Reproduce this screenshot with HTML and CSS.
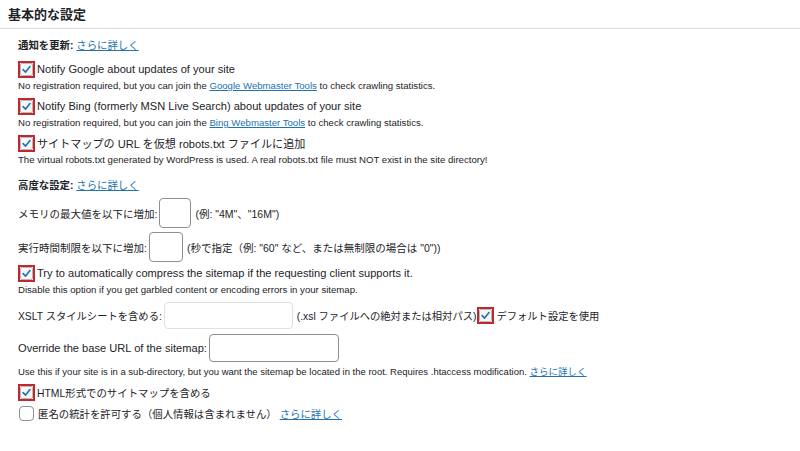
FILE: index.html
```html
<!DOCTYPE html>
<html lang="ja">
  <head>
    <meta charset="UTF-8" />
    <title>基本的な設定</title>
    <link rel="stylesheet" href="styles.css">
  </head>
  <body>
    <h2 class="box-title">基本的な設定</h2>

    <div class="box-body">
      <!-- Ping settings -->
      <div class="group-title">通知を更新: <a href="#">さらに詳しく</a></div>

      <label class="check-row first">
        <span class="cb on"><svg viewBox="0 0 12 12"><path d="M2.3 6.2 L5 8.8 L9.8 2.8" /></svg></span>
        Notify Google about updates of your site
      </label>
      <div class="desc">No registration required, but you can join the <a href="#">Google Webmaster Tools</a> to check crawling statistics.</div>

      <label class="check-row">
        <span class="cb on"><svg viewBox="0 0 12 12"><path d="M2.3 6.2 L5 8.8 L9.8 2.8" /></svg></span>
        Notify Bing (formerly MSN Live Search) about updates of your site
      </label>
      <div class="desc">No registration required, but you can join the <a href="#">Bing Webmaster Tools</a> to check crawling statistics.</div>

      <label class="check-row">
        <span class="cb on"><svg viewBox="0 0 12 12"><path d="M2.3 6.2 L5 8.8 L9.8 2.8" /></svg></span>
        サイトマップの URL を仮想 robots.txt ファイルに追加
      </label>
      <div class="desc">The virtual robots.txt generated by WordPress is used. A real robots.txt file must NOT exist in the site directory!</div>

      <!-- Advanced settings -->
      <div class="group-title second">高度な設定: <a href="#">さらに詳しく</a></div>

      <div class="field-row memory">
        メモリの最大値を以下に増加:<input class="tiny" type="text" /><span class="hint">(例: "4M"、"16M")</span>
      </div>

      <div class="field-row timeout">
        実行時間制限を以下に増加:<input class="tiny wide" type="text" /><span class="hint">(秒で指定（例: "60" など、または無制限の場合は "0"))</span>
      </div>

      <label class="check-row gz">
        <span class="cb on"><svg viewBox="0 0 12 12"><path d="M2.3 6.2 L5 8.8 L9.8 2.8" /></svg></span>
        Try to automatically compress the sitemap if the requesting client supports it.
      </label>
      <div class="desc">Disable this option if you get garbled content or encoding errors in your sitemap.</div>

      <div class="field-row xslt">
        XSLT スタイルシートを含める:<input class="text light" type="text" /><span class="hint">(.xsl ファイルへの絶対または相対パス)</span>
        <span class="cb on"><svg viewBox="0 0 12 12"><path d="M2.3 6.2 L5 8.8 L9.8 2.8" /></svg></span>デフォルト設定を使用
      </div>

      <div class="field-row baseurl">
        Override the base URL of the sitemap:<input class="text" type="text" />
      </div>
      <div class="desc base-desc">Use this if your site is in a sub-directory, but you want the sitemap be located in the root. Requires .htaccess modification. <a href="#">さらに詳しく</a></div>

      <label class="check-row html jp">
        <span class="cb on"><svg viewBox="0 0 12 12"><path d="M2.3 6.2 L5 8.8 L9.8 2.8" /></svg></span>
        HTML形式でのサイトマップを含める
      </label>

      <label class="check-row stats jp">
        <span class="cb off"></span>
        匿名の統計を許可する（個人情報は含まれません） <a href="#" class="more">さらに詳しく</a>
      </label>
    </div>
  </body>
</html>
```

FILE: styles.css
```css
/* Settings box */
body {
  margin: 0;
  background: #fff;
  color: #1d2327;
  font-family: "Liberation Sans", "Noto Sans CJK JP", sans-serif;
}

a {
  color: #2271b1;
  text-decoration: underline;
}

.box-title {
  margin: 0;
  height: 29px;
  padding: 7px 8px 0;
  box-sizing: border-box;
  border-bottom: 1px solid #dcdcde;
  font-size: 13px;
  line-height: 16px;
  font-weight: bold;
}

.box-body {
  padding-left: 18px;
}

.group-title {
  margin-top: 9px;
  height: 16px;
  line-height: 16px;
  font-size: 10.4px;
  font-weight: bold;
}

.group-title a {
  font-weight: normal;
}

.group-title.second {
  margin-top: 11px;
}

/* Checkbox rows */
.check-row {
  display: flex;
  align-items: center;
  height: 18px;
  margin-top: 4px;
  font-size: 11.1px;
  white-space: nowrap;
}

.check-row.jp {
  font-size: 10.4px;
}

.check-row.first {
  margin-top: 6px;
}

.check-row.gz {
  margin-top: 2px;
}

.check-row.html {
  margin-top: 4px;
}

.check-row.stats {
  margin-top: 3px;
}

.check-row .more {
  margin-left: 3px;
}

.cb {
  flex: none;
  display: inline-flex;
  align-items: center;
  justify-content: center;
  box-sizing: border-box;
  width: 17px;
  height: 17px;
  margin-right: 2px;
}

.cb.on {
  border: 2px solid #c1272d;
  background: #fff;
}

.cb.on svg {
  width: 11px;
  height: 11px;
  border: 1px solid #b4b9be;
  border-radius: 2px;
  background: #f6f7f7;
}

.cb.on path {
  fill: none;
  stroke: #2271b1;
  stroke-width: 1.8;
  stroke-linecap: round;
  stroke-linejoin: round;
}

.cb.off {
  width: 15px;
  height: 15px;
  margin-left: 1px;
  margin-right: 4px;
  border: 1px solid #8c8f94;
  border-radius: 4px;
}

.desc {
  height: 14px;
  line-height: 14px;
  margin-top: 1px;
  font-size: 9.6px;
  white-space: nowrap;
}

.desc.base-desc {
  margin-top: 3px;
  font-size: 9.5px;
}

/* Input rows */
.field-row {
  display: flex;
  align-items: center;
  margin-top: 4px;
  font-size: 10.5px;
  white-space: nowrap;
}

.field-row.xslt,
.field-row.baseurl {
  margin-top: 5px;
}

.field-row.xslt {
  font-size: 10.3px;
}

.field-row.baseurl {
  font-size: 11.1px;
}

.field-row.xslt .cb {
  margin-left: 1px;
}

input {
  box-sizing: border-box;
  margin: 0 3px 0 2px;
  padding: 0;
  border: 1px solid #8c8f94;
  border-radius: 4px;
  background: #fff;
}

input.tiny {
  width: 32px;
  height: 30px;
}

input.tiny.wide {
  width: 34px;
}

input.text {
  width: 130px;
  height: 28px;
}

input.light {
  width: 129px;
  height: 27px;
  border-color: #e0e0e0;
}

.hint {
  margin-left: 1px;
}
```
